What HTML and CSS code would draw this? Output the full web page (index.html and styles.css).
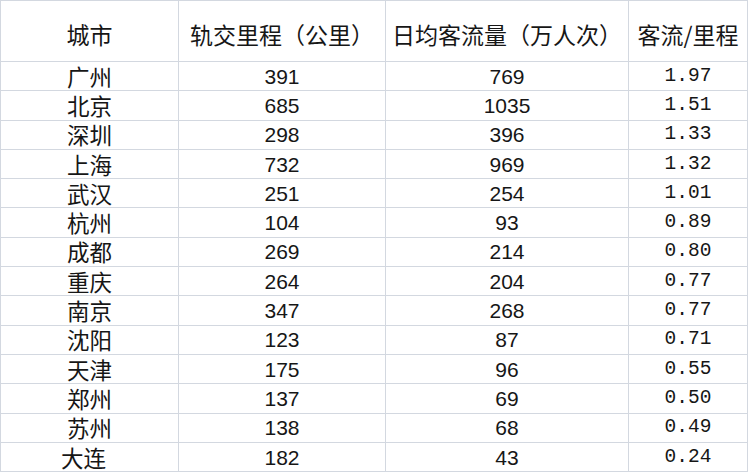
FILE: index.html
```html
<!DOCTYPE html>
<html lang="zh-CN">
<head>
<meta charset="utf-8">
<title>城市轨交客流</title>
<link rel="stylesheet" href="styles.css">
</head>
<body>
<table class="sheet">
  <colgroup>
    <col class="c1"><col class="c2"><col class="c3"><col class="c4">
  </colgroup>
  <thead>
    <tr class="head">
      <th>城市</th>
      <th>轨交里程（公里）</th>
      <th>日均客流量（万人次）</th>
      <th>客流/里程</th>
    </tr>
  </thead>
  <tbody>
    <tr><td class="city">广州</td><td class="num">391</td><td class="num">769</td><td class="ratio">1.97</td></tr>
    <tr><td class="city">北京</td><td class="num">685</td><td class="num">1035</td><td class="ratio">1.51</td></tr>
    <tr><td class="city">深圳</td><td class="num">298</td><td class="num">396</td><td class="ratio">1.33</td></tr>
    <tr><td class="city">上海</td><td class="num">732</td><td class="num">969</td><td class="ratio">1.32</td></tr>
    <tr><td class="city">武汉</td><td class="num">251</td><td class="num">254</td><td class="ratio">1.01</td></tr>
    <tr><td class="city">杭州</td><td class="num">104</td><td class="num">93</td><td class="ratio">0.89</td></tr>
    <tr><td class="city">成都</td><td class="num">269</td><td class="num">214</td><td class="ratio">0.80</td></tr>
    <tr><td class="city">重庆</td><td class="num">264</td><td class="num">204</td><td class="ratio">0.77</td></tr>
    <tr><td class="city">南京</td><td class="num">347</td><td class="num">268</td><td class="ratio">0.77</td></tr>
    <tr><td class="city">沈阳</td><td class="num">123</td><td class="num">87</td><td class="ratio">0.71</td></tr>
    <tr><td class="city">天津</td><td class="num">175</td><td class="num">96</td><td class="ratio">0.55</td></tr>
    <tr><td class="city">郑州</td><td class="num">137</td><td class="num">69</td><td class="ratio">0.50</td></tr>
    <tr><td class="city">苏州</td><td class="num">138</td><td class="num">68</td><td class="ratio">0.49</td></tr>
    <tr><td class="city last">大连</td><td class="num">182</td><td class="num">43</td><td class="ratio">0.24</td></tr>
  </tbody>
</table>
</body>
</html>
```
FILE: styles.css
```css
html, body {
  margin: 0;
  padding: 0;
  background: #ffffff;
}
body {
  font-family: "Noto Sans CJK SC", "Noto Sans", sans-serif;
  color: #161616;
}
.sheet {
  border-collapse: collapse;
  table-layout: fixed;
  width: 747px;
  margin: 0;
}
.c1 { width: 178px; }
.c2 { width: 207px; }
.c3 { width: 243px; }
.c4 { width: 119px; }
.sheet th,
.sheet td {
  border: 1px solid #d3d8e0;
  padding: 0;
  text-align: center;
  vertical-align: middle;
  white-space: nowrap;
}
.head th {
  height: 61px;
  font-weight: normal;
  font-size: 23px;
  line-height: 23px;
  padding-top: 6px;
  box-sizing: border-box;
}
.sheet tbody tr {
  height: 29.3px;
}
.sheet td {
  line-height: 21px;
}
.city {
  font-size: 22.5px;
}
.city.last {
  padding-right: 12px;
}
.num {
  font-family: "Liberation Sans", Arial, sans-serif;
  font-size: 21px;
}
.ratio {
  font-family: "Liberation Mono", "Courier New", monospace;
  font-size: 19.5px;
  text-align: right;
  padding-right: 18px;
}
```
